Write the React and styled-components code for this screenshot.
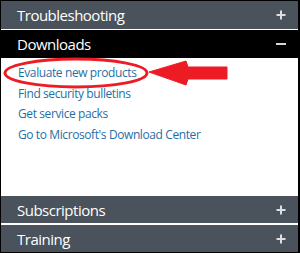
import React from "react";
import styled, { createGlobalStyle } from "styled-components";

const Global = createGlobalStyle`
  html, body { margin: 0; padding: 0; background: #fff; }
  body { font-family: "Open Sans", "Noto Sans", Arial, sans-serif; }
`;

const Panel = styled.div`
  position: relative;
  width: 300px;
  height: 253px;
  box-sizing: border-box;
  border: 1px solid #000;
  border-right-width: 2px;
  background: #fff;
  display: flex;
  flex-direction: column;
  overflow: hidden;
`;

const Header = styled.div`
  height: ${(p) => p.$h}px;
  flex: none;
  box-sizing: border-box;
  display: flex;
  align-items: center;
  justify-content: space-between;
  padding: 0 12px 0 16px;
  background: ${(p) => (p.$active ? "#000" : "#4a535c")};
  color: #fff;
  font-size: 15px;
`;

const Title = styled.span`
  letter-spacing: -0.5px;
`;

const Body = styled.div`
  flex: 1;
  padding: 5px 0 0 17px;
  display: flex;
  flex-direction: column;
`;

const Link = styled.a`
  font-size: 12px;
  line-height: 20.7px;
  letter-spacing: -0.4px;
  color: #1f6fa6;
  text-decoration: none;
`;

const Sep = styled.div`
  height: ${(p) => p.$h}px;
  background: #fff;
  flex: none;
`;

const Overlay = styled.svg`
  position: absolute;
  left: -1px;
  top: -1px;
  pointer-events: none;
`;

function Plus() {
  return (
    <svg width="10" height="10" viewBox="0 0 10 10">
      <path d="M5 0.5V9.5M0.5 5H9.5" stroke="#dcdfe2" strokeWidth="2" />
    </svg>
  );
}

function Minus() {
  return (
    <svg width="10" height="10" viewBox="0 0 10 10">
      <path d="M0 5H10" stroke="#d8d8d8" strokeWidth="2" />
    </svg>
  );
}

export default function App() {
  return (
    <>
      <Global />
      <Panel>
        <Header $h={28}>
          <Title>Troubleshooting</Title>
          <Plus />
        </Header>
        <Sep $h={1} />
        <Header $h={28} $active>
          <Title>Downloads</Title>
          <Minus />
        </Header>
        <Body>
          <Link>Evaluate new products</Link>
          <Link>Find security bulletins</Link>
          <Link>Get service packs</Link>
          <Link>Go to Microsoft's Download Center</Link>
        </Body>
        <Header $h={27}>
          <Title>Subscriptions</Title>
          <Plus />
        </Header>
        <Sep $h={2} />
        <Header $h={27}>
          <Title>Training</Title>
          <Plus />
        </Header>
        <Overlay width="300" height="253" viewBox="0 0 300 253">
          <ellipse cx="76" cy="73" rx="71" ry="14" fill="none" stroke="#ed1c24" strokeWidth="3" />
          <path d="M149 72 L186 61 L188 67 L227 67 L227 79 L188 79 L186 85 Z" fill="#ed1c24" stroke="#ed1c24" strokeWidth="1" strokeLinejoin="round" />
        </Overlay>
      </Panel>
    </>
  );
}
